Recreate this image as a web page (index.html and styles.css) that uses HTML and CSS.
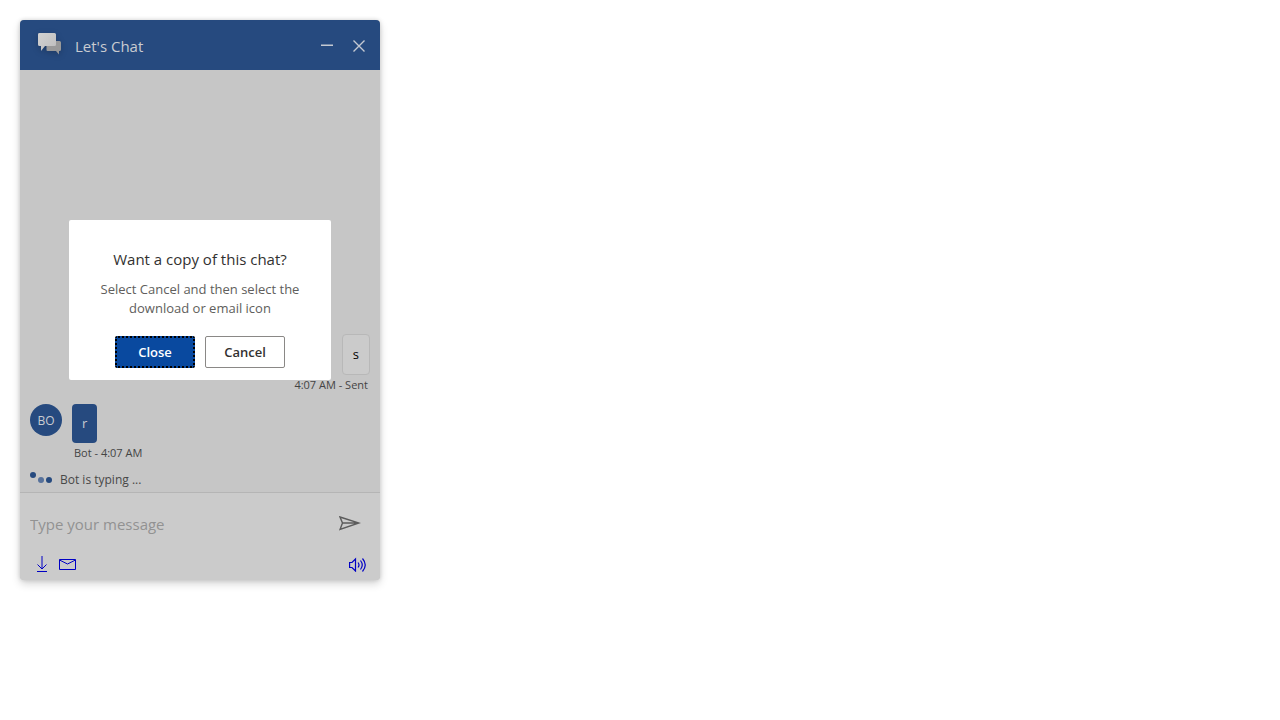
FILE: index.html
```html
<!DOCTYPE html>
<html lang="en">
<head>
<meta charset="utf-8">
<meta name="viewport" content="width=device-width, initial-scale=1">
<title>Let's Chat</title>
<link rel="stylesheet" href="styles.css">
</head>
<body>
<main class="chat">
  <header class="chat-header">
    <svg class="logo" width="24" height="22" viewBox="0 0 24 22" aria-hidden="true">
      <defs><linearGradient id="front" x1="0" y1="0" x2="1" y2="1"><stop offset="0" stop-color="#d2d2d2"/><stop offset="1" stop-color="#bdbdbd"/></linearGradient></defs>
      <path fill="#999" d="M9.500 8h12a1.500 1.500 0 0 1 1.500 1.500v7a1.500 1.500 0 0 1-1.500 1.500H21v3.500L18 18H9.500a1 1 0 0 1-1-1V9a1 1 0 0 1 1-1z"/>
      <path fill="url(#front)" d="M1.500 0h15A1.500 1.500 0 0 1 18 1.500v10a1.500 1.500 0 0 1-1.500 1.500H7l-4 5v-5H1.500A1.500 1.500 0 0 1 0 11.500v-10A1.500 1.500 0 0 1 1.500 0z"/>
    </svg>
    <h1 class="title">Let's Chat</h1>
    <button class="icon-button" type="button" aria-label="Minimize">
      <svg width="12" height="12" viewBox="0 0 12 12"><path d="M0 5.250h12" fill="none" stroke="#c4c9d2" stroke-width="1.500"/></svg>
    </button>
    <button class="icon-button" type="button" aria-label="Close chat">
      <svg width="12" height="12" viewBox="0 0 12 12"><path d="M.5.500l11 11M11.500.500l-11 11" fill="none" stroke="#c4c9d2" stroke-width="1.400"/></svg>
    </button>
  </header>

  <section class="messages" aria-label="Messages">
    <div class="sent">
      <p class="bubble bubble-sent">s</p>
      <p class="stamp">4:07 AM - Sent</p>
    </div>
    <div class="received">
      <span class="avatar">BO</span>
      <div>
        <p class="bubble bubble-bot">r</p>
        <p class="stamp">Bot - 4:07 AM</p>
      </div>
    </div>
    <div class="typing">
      <svg width="23" height="12" viewBox="0 0 23 12" aria-hidden="true"><g fill="#264a7f"><circle cx="3" cy="3" r="3"/><circle cx="11" cy="8" r="3" fill="#56719b"/><circle cx="19" cy="8" r="3"/></g></svg>
      <span>Bot is typing ...</span>
    </div>
  </section>

  <footer class="composer">
    <div class="entry">
      <input class="message-input" type="text" aria-label="Message" placeholder="Type your message">
      <button class="icon-button" type="button" aria-label="Send">
        <svg width="22" height="16" viewBox="0 0 22 16"><path d="M1 1L20 7 1 13.500 3.500 7zM3.500 7H20" fill="none" stroke="#5c5c5c" stroke-width="1.400"/></svg>
      </button>
    </div>
    <div class="tools">
      <button class="icon-button" type="button" aria-label="Download">
        <svg width="10" height="16" viewBox="0 0 10 16" fill="none" stroke="#0000c4"><path d="M5 0v13M.5 8.500L5 13l4.500-4.500"/><path d="M0 15.500h10"/></svg>
      </button>
      <button class="icon-button" type="button" aria-label="Email">
        <svg width="17" height="11" viewBox="0 0 17 11" fill="none" stroke="#0000c4"><path d="M.5.500h16v10H.5zM.5 1l8 4 8-4"/></svg>
      </button>
      <button class="icon-button sound" type="button" aria-label="Sound">
        <svg width="18" height="16" viewBox="0 0 18 16" fill="none" stroke="#0000c4" stroke-width="1.200"><path d="M.6 6.500H3L6.500 3v12L3 11.500H.6zM9 6.500q2 2.500 0 5M11.500 4.500q3.500 4.500 0 9M13.500 2.500q5.500 6.500 0 13"/></svg>
      </button>
    </div>
  </footer>

  <div class="overlay">
    <section class="dialog" role="dialog" aria-modal="true" aria-labelledby="dialog-title">
      <h2 class="dialog-title" id="dialog-title">Want a copy of this chat?</h2>
      <p class="dialog-text">Select Cancel and then select the download or email icon</p>
      <div class="dialog-actions">
        <button class="button button-primary" type="button">Close</button>
        <button class="button" type="button">Cancel</button>
      </div>
    </section>
  </div>
</main>
</body>
</html>
```
FILE: styles.css
```css
* {
  box-sizing: border-box;
}

body {
  margin: 0;
  padding: 20px;
  background: #fff;
  font-family: "Segoe UI", "Open Sans", "Noto Sans", sans-serif;
}

h1, h2, p {
  margin: 0;
  font-weight: 400;
}

.chat {
  position: relative;
  display: flex;
  flex-direction: column;
  max-width: 360px;
  min-height: 560px;
  border-radius: 4px;
  overflow: hidden;
  background: #c6c6c6;
  box-shadow: 0 0 4px rgba(0, 0, 0, 0.16), 0 4px 8px rgba(0, 0, 0, 0.16);
}

.chat-header {
  display: flex;
  align-items: center;
  height: 50px;
  padding: 2px 15px 0 18px;
  gap: 20px;
  background: #264a7f;
}

.logo {
  margin: 0 -7px 4px 0;
  filter: drop-shadow(0 2px 3px rgba(0, 0, 0, 0.2));
}

.title {
  flex: 1;
  font-size: 15px;
  line-height: 22px;
  color: #c9ccd1;
}

.icon-button {
  display: flex;
  padding: 0;
  border: 0;
  background: none;
}

.messages {
  display: flex;
  flex: 1;
  flex-direction: column;
  justify-content: flex-end;
  padding: 0 10px 4px;
}

.sent {
  display: flex;
  flex-direction: column;
  align-items: flex-end;
}

.bubble {
  width: fit-content;
  padding: 10px;
  border-radius: 4px;
  font-size: 13px;
  line-height: 19px;
}

.bubble-sent {
  border: 1px solid #b8b8b8;
  background: #cbcbcb;
  color: #000;
}

.bubble-bot {
  background: #264a7f;
  color: #c9ccd1;
}

.stamp {
  padding: 3px 2px;
  font-size: 11px;
  line-height: 14px;
  color: #444;
}

.received {
  display: flex;
  gap: 10px;
  margin-top: 9px;
}

.avatar {
  display: flex;
  align-items: center;
  justify-content: center;
  width: 32px;
  height: 32px;
  padding-top: 2px;
  border-radius: 50%;
  background: #264a7f;
  color: #c9ccd1;
  font-size: 12px;
  font-weight: 500;
  line-height: 16px;
}

.typing {
  display: flex;
  gap: 7px;
  margin-top: 9px;
  font-size: 12px;
  line-height: 16px;
  color: #484848;
}

.composer {
  height: 88px;
  padding: 20px 13px 8px 10px;
  border-top: 1px solid #b5b5b5;
  background: #cbcbcb;
}

.entry {
  display: flex;
  align-items: center;
  height: 22px;
  padding-right: 6px;
}

.message-input {
  flex: 1;
  min-width: 0;
  padding: 0;
  border: 0;
  outline: 0;
  background: none;
  color: #333;
  font: 15px/22px "Segoe UI", "Open Sans", "Noto Sans", sans-serif;
}

.message-input::placeholder {
  color: #929292;
  opacity: 1;
}

.tools {
  display: flex;
  align-items: center;
  gap: 12px;
  padding: 21px 0 0 7px;
}

.sound {
  margin-left: auto;
}

.overlay {
  position: absolute;
  inset: 0;
  display: flex;
  align-items: center;
  justify-content: center;
}

.dialog {
  width: 262px;
  padding: 28px 24px 12px;
  border-radius: 2px;
  background: #fff;
  text-align: center;
}

.dialog-title {
  font-size: 15px;
  line-height: 22px;
  color: #323130;
}

.dialog-text {
  margin-top: 10px;
  font-size: 13px;
  line-height: 19px;
  color: #605e5c;
}

.dialog-actions {
  display: flex;
  justify-content: center;
  gap: 10px;
  margin-top: 18px;
}

.button {
  width: 80px;
  height: 32px;
  padding: 0;
  border: 1px solid #8a8886;
  border-radius: 2px;
  background: #fff;
  color: #323130;
  font: 600 13px/19px "Segoe UI", "Open Sans", "Noto Sans", sans-serif;
}

.button-primary {
  border: 2px dotted #000;
  background: #09499f;
  color: #fff;
}
```
